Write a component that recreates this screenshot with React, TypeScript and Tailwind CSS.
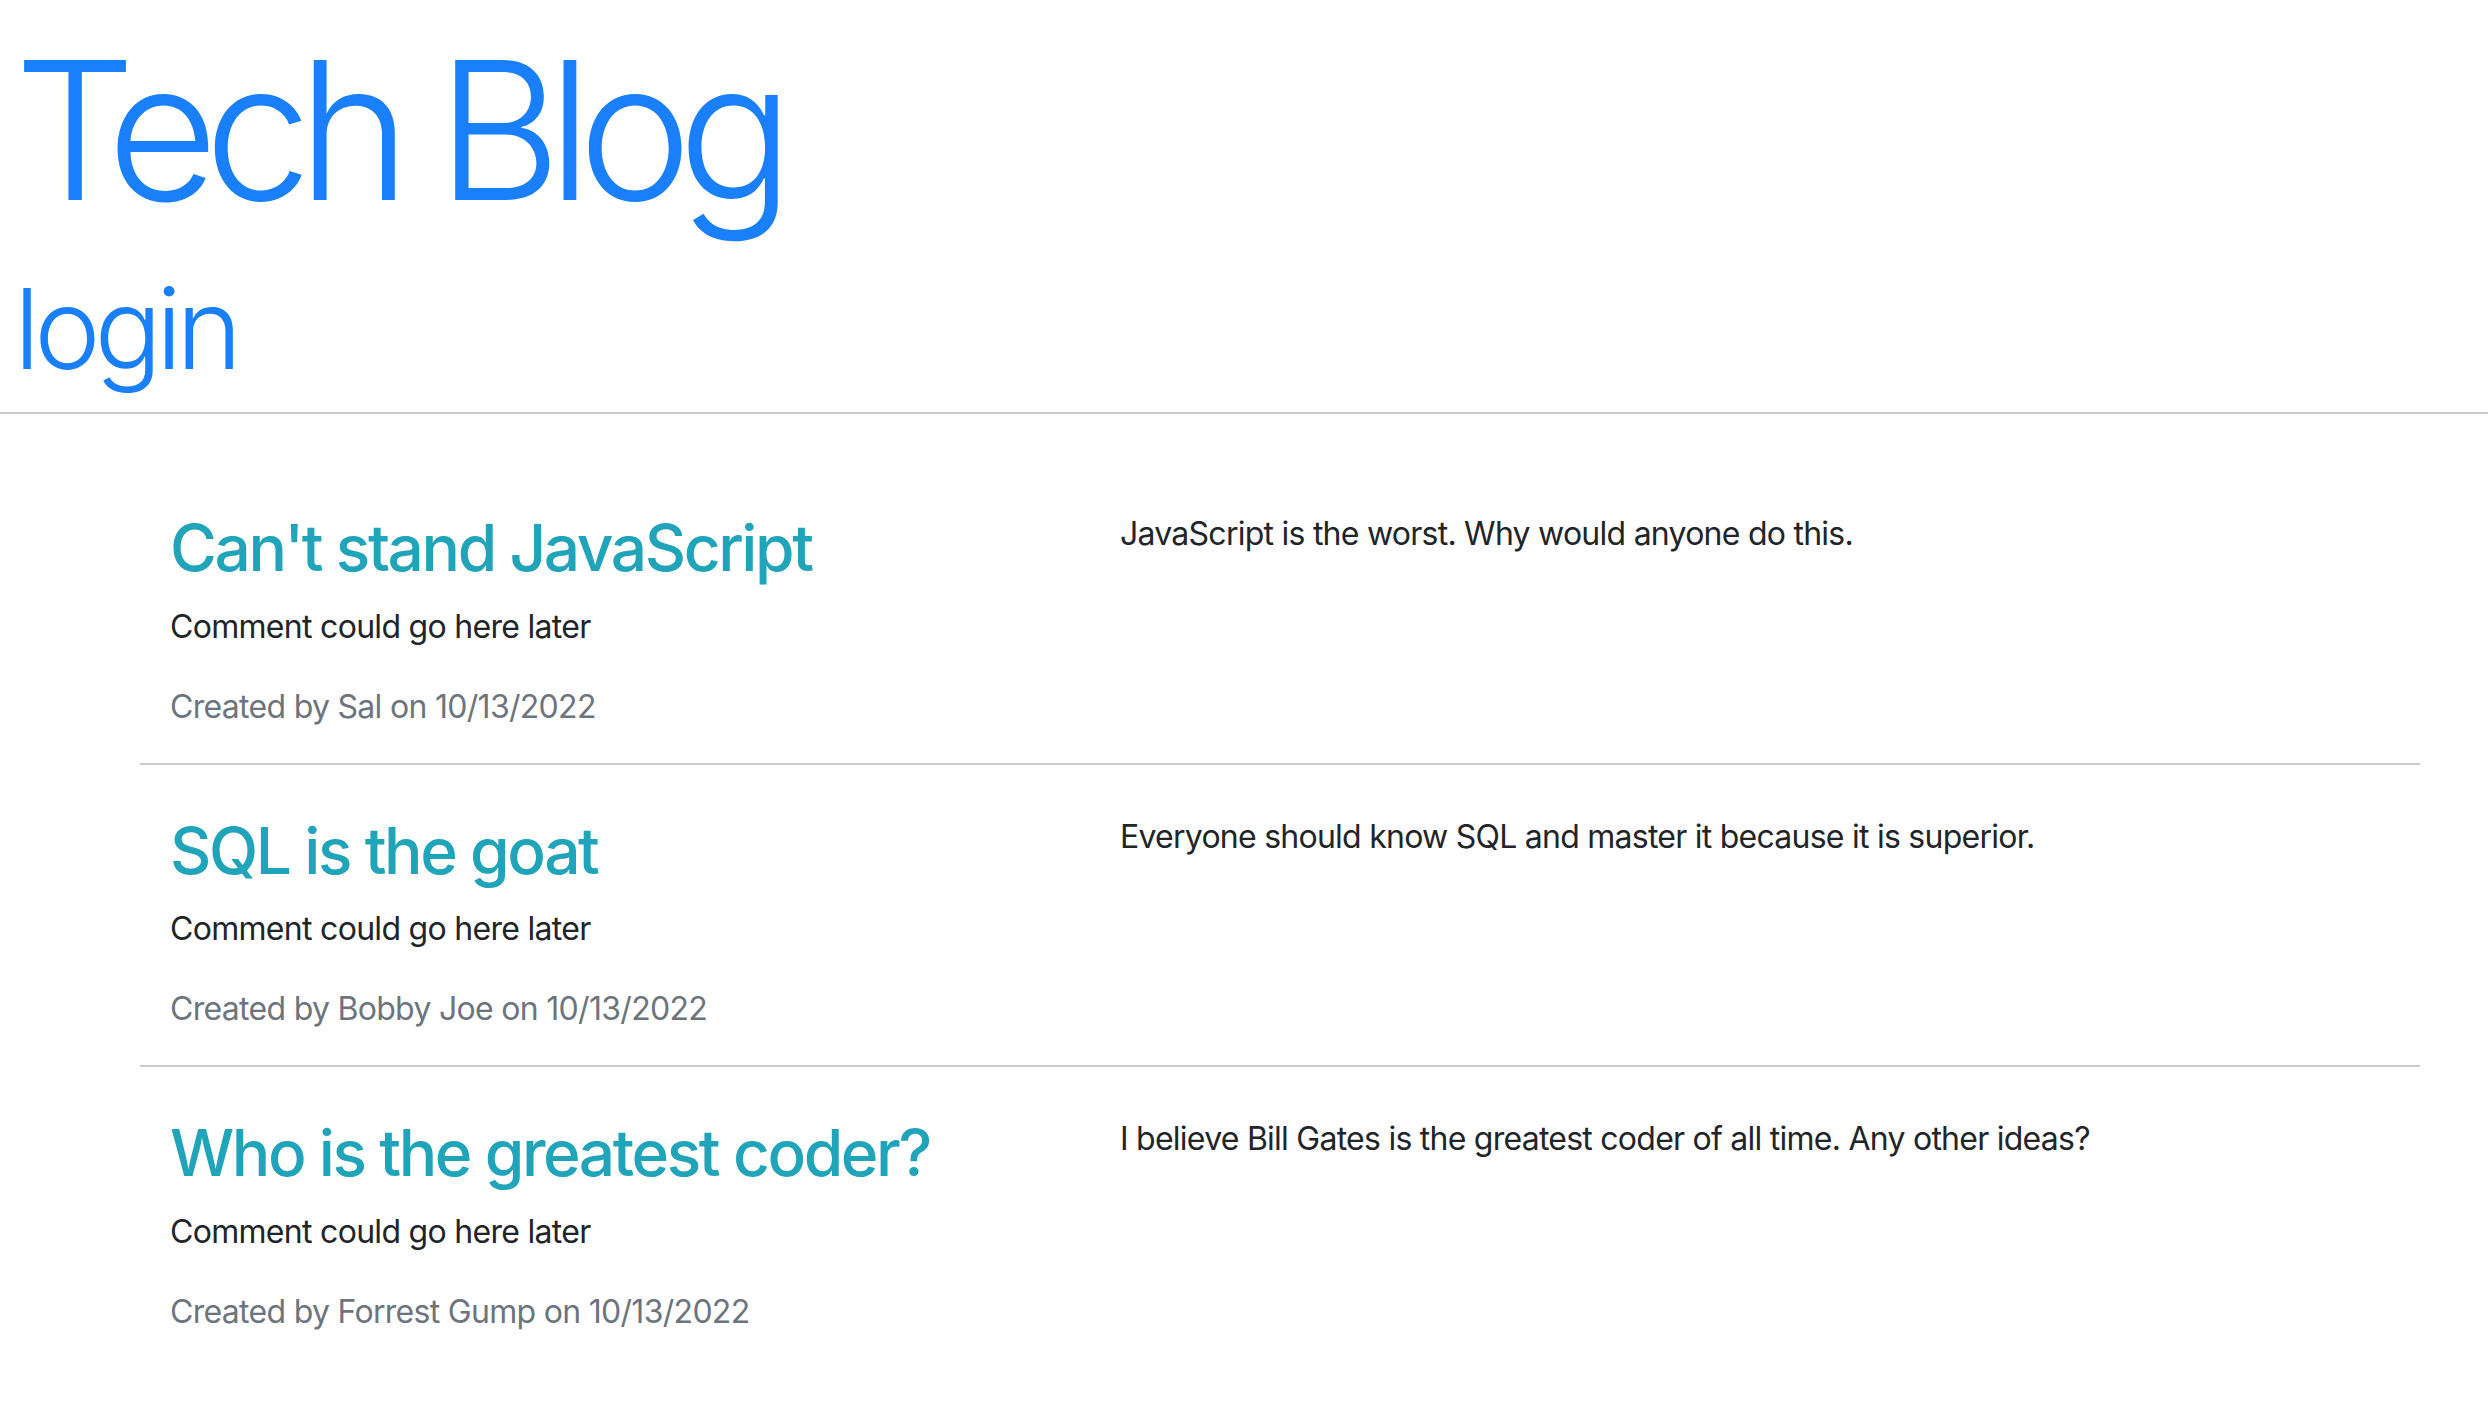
import React from "react";

const posts = [
  {
    title: "Can't stand JavaScript",
    author: "Sal",
    body: "JavaScript is the worst. Why would anyone do this.",
  },
  {
    title: "SQL is the goat",
    author: "Bobby Joe",
    body: "Everyone should know SQL and master it because it is superior.",
  },
  {
    title: "Who is the greatest coder?",
    author: "Forrest Gump",
    body: "I believe Bill Gates is the greatest coder of all time. Any other ideas?",
  },
];

export default function App() {
  return (
    <div className="min-h-screen bg-white font-['Inter','Liberation_Sans',sans-serif]">
      <header className="border-b-2 border-[#cccccc] px-[14px] pt-[15px]">
        <h1 className="mb-4 text-[192px] font-light leading-[1.2] tracking-[-14px] text-[#1a7ffb]">
          Tech Blog
        </h1>
        <h2 className="mb-4 text-[112px] font-light leading-[1.2] tracking-[-6px] text-[#1a7ffb]">
          login
        </h2>
      </header>
      <main className="ml-[140px] mt-12 w-[2280px]">
        {posts.map((p, i) => (
          <div
            key={p.title}
            className={
              i < posts.length - 1
                ? "grid grid-cols-12 border-b-2 border-[#cccccc] pt-12"
                : "grid grid-cols-12 pt-12"
            }
          >
            <div className="col-span-5 pl-[30px]">
              <h3 className="mb-4 text-[64px] font-medium leading-[1.2] tracking-[-2.4px] text-[#20a4b9]">
                {p.title}
              </h3>
              <p className="mb-8 text-[32px] leading-[1.5] tracking-[-0.7px] text-[#212529]">
                Comment could go here later
              </p>
              <p className="mb-8 text-[32px] leading-[1.5] tracking-[-0.7px] text-[#6c757d]">
                Created by {p.author} on 10/13/2022
              </p>
            </div>
            <div className="col-span-7 pl-[30px]">
              <p className="text-[32px] leading-[1.5] tracking-[-0.75px] text-[#212529]">
                {p.body}
              </p>
            </div>
          </div>
        ))}
      </main>
    </div>
  );
}
